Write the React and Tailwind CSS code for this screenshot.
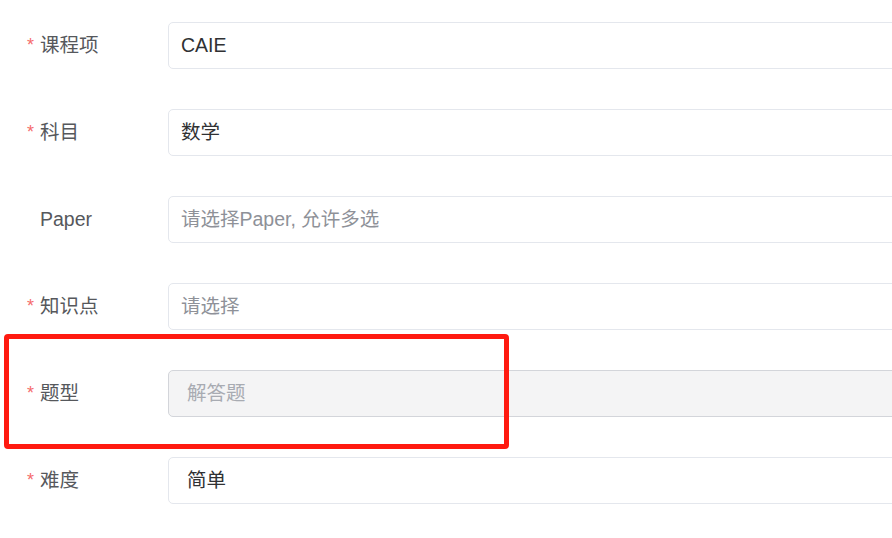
const rows = [
  { label: '课程项', required: true, value: 'CAIE' },
  { label: '科目', required: true, value: '数学' },
  { label: 'Paper', required: false, placeholder: '请选择Paper, 允许多选' },
  { label: '知识点', required: true, placeholder: '请选择' },
  { label: '题型', required: true, value: '解答题', disabled: true },
  { label: '难度', required: true, value: '简单', wide: true },
];

const FormRow = ({ row }) => {
  let boxClass = 'bg-white border-[#e4e7ed] text-[#303133] pl-[12px]';
  if (row.disabled) boxClass = 'bg-[#f4f4f5] border-[#d3d5da] text-[#a8abb2] pl-[18px]';
  else if (row.wide) boxClass = 'bg-white border-[#e4e7ed] text-[#303133] pl-[18px]';

  return (
    <div className="flex items-center h-[47px] mb-[40px]">
      <div className="w-[168px] shrink-0 flex items-center pl-[27px] text-[#56585c]">
        <span className={row.required ? 'text-[#f56c6c] w-[13px] text-[18px]' : 'w-[13px]'}>
          {row.required ? '*' : ''}
        </span>
        <span>{row.label}</span>
      </div>
      <div
        className={`w-[760px] shrink-0 h-[47px] flex items-center border rounded-[5px] ${boxClass}`}
      >
        {row.value ? (
          <span>{row.value}</span>
        ) : (
          <span className="text-[#8e9198]">{row.placeholder}</span>
        )}
      </div>
    </div>
  );
};

const App = () => {
  return (
    <div
      className="relative w-[892px] h-[538px] overflow-hidden bg-white pt-[22px] text-[19.5px]"
      style={{ fontFamily: '"Liberation Sans", "Noto Sans CJK SC", sans-serif' }}
    >
      {rows.map((row) => (
        <FormRow key={row.label} row={row} />
      ))}
      {/* annotation box around 题型 */}
      <div className="absolute left-[4px] top-[334px] w-[505px] h-[115px] border-[5px] border-[#ff1a10] rounded-[4px] pointer-events-none" />
    </div>
  );
};

export default App;
